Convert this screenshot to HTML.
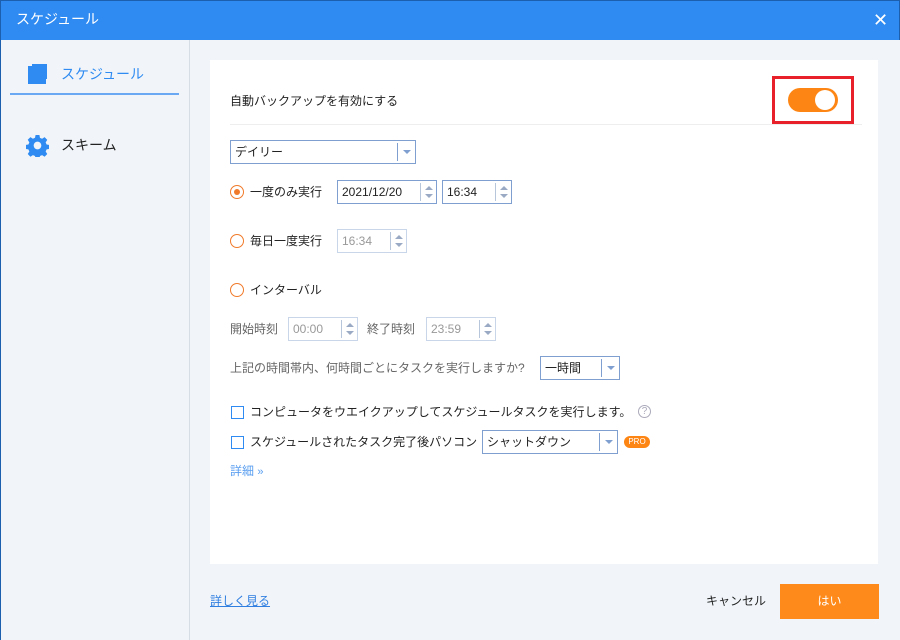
<!DOCTYPE html>
<html><head><meta charset="utf-8"><style>
*{margin:0;padding:0;box-sizing:border-box}
body{width:900px;height:640px;overflow:hidden;font-family:"Liberation Sans","Noto Sans CJK JP",sans-serif;font-size:12px;color:#222;background:#f1f5fa;position:relative}
.a{position:absolute;white-space:nowrap;line-height:16px}
.title{left:0;top:0;width:900px;height:40px;background:#2f8bf1;border:1px solid #1c5fae;border-bottom:none}
.side{left:0;top:40px;width:190px;height:600px;background:#f1f5fa;border-left:1px solid #1c5fae;border-right:1px solid #d8dde5}
.panel{left:210px;top:60px;width:668px;height:504px;background:#fff}
.box{position:absolute;border:1px solid #7f9fd0;background:#fff;height:24px;font-size:12px;line-height:22px;padding-left:4px;white-space:nowrap}
.box.dis{border-color:#c9d6ea;color:#999}
.spin{position:absolute;right:0;top:2px;width:16px;height:18px;border-left:1px solid #b8c6dc}
.spin:before{content:"";position:absolute;left:4px;top:3px;border:4px solid transparent;border-bottom:4px solid #9aaac4;border-top:none}
.spin:after{content:"";position:absolute;left:4px;top:11px;border:4px solid transparent;border-top:4px solid #9aaac4;border-bottom:none}
.dd{position:absolute;right:0;top:2px;width:18px;height:18px;border-left:1px solid #7f9fd0}
.dd:after{content:"";position:absolute;left:5px;top:7px;border:4px solid transparent;border-top:4px solid #7f9fd0;border-bottom:none}
.radio{width:14px;height:14px;border:1.5px solid #f07a2a;border-radius:50%}
.cb{width:13px;height:13px;border:1.5px solid #2f8bf1}
.gray{color:#666}
</style></head><body>
<div class="a title"></div>
<div class="a" style="left:16px;top:11px;color:#fff;font-size:14px">スケジュール</div>
<div class="a" style="left:873px;top:11px;color:#fff;font-size:18px;line-height:18px">✕</div>
<div class="a side"></div>
<div class="a" style="left:28px;top:66px;width:18px;height:18px;background:#2f8bf1"></div>
<div class="a" style="left:32px;top:64px;width:15px;height:2px;background:#2f8bf1"></div>
<div class="a" style="left:45px;top:64px;width:2px;height:15px;background:#2f8bf1"></div>
<div class="a" style="left:61px;top:66px;color:#2f8bf1;font-size:14px">スケジュール</div>
<div class="a" style="left:10px;top:93px;width:169px;height:2px;background:#6aa8f4"></div>
<svg class="a" style="left:26px;top:134px" width="23" height="23" viewBox="0 0 24 24"><path fill="#2f8bf1" d="M10 1h4l.6 3 2.2 1 2.6-1.7 2.8 2.8-1.7 2.6 1 2.2 3 .6v4l-3 .6-1 2.2 1.7 2.6-2.8 2.8-2.6-1.7-2.2 1-.6 3h-4l-.6-3-2.2-1-2.6 1.7-2.8-2.8 1.7-2.6-1-2.2-3-.6v-4l3-.6 1-2.2L1.8 6 4.6 3.2l2.6 1.7 2.2-1zM12 8a4 4 0 100 8 4 4 0 000-8z"/></svg>
<div class="a" style="left:61px;top:137px;font-size:14px">スキーム</div>

<div class="a panel"></div>
<div class="a" style="left:230px;top:93px">自動バックアップを有効にする</div>
<div class="a" style="left:230px;top:124px;width:632px;height:1px;background:#eee"></div>
<div class="a" style="left:772px;top:76px;width:82px;height:48px;border:3px solid #e8202a"></div>
<div class="a" style="left:788px;top:88px;width:50px;height:24px;border-radius:12px;background:#fd8514"></div>
<div class="a" style="left:815px;top:90px;width:20px;height:20px;border-radius:50%;background:#fff"></div>

<div class="box" style="left:230px;top:140px;width:186px">デイリー<div class="dd"></div></div>

<div class="a radio" style="left:230px;top:185px"></div>
<div class="a" style="left:234px;top:189px;width:6px;height:6px;border-radius:50%;background:#f07a2a"></div>
<div class="a" style="left:250px;top:184px">一度のみ実行</div>
<div class="box" style="left:337px;top:180px;width:100px">2021/12/20<div class="spin"></div></div>
<div class="box" style="left:442px;top:180px;width:70px">16:34<div class="spin"></div></div>

<div class="a radio" style="left:230px;top:234px"></div>
<div class="a" style="left:250px;top:233px">毎日一度実行</div>
<div class="box dis" style="left:337px;top:229px;width:70px">16:34<div class="spin"></div></div>

<div class="a radio" style="left:230px;top:283px"></div>
<div class="a" style="left:250px;top:282px">インターバル</div>

<div class="a gray" style="left:230px;top:321px">開始時刻</div>
<div class="box dis" style="left:288px;top:317px;width:70px">00:00<div class="spin"></div></div>
<div class="a gray" style="left:367px;top:321px">終了時刻</div>
<div class="box dis" style="left:426px;top:317px;width:70px">23:59<div class="spin"></div></div>

<div class="a gray" style="left:230px;top:360px">上記の時間帯内、何時間ごとにタスクを実行しますか?</div>
<div class="box" style="left:540px;top:356px;width:80px">一時間<div class="dd"></div></div>

<div class="a cb" style="left:231px;top:406px"></div>
<div class="a" style="left:250px;top:404px">コンピュータをウエイクアップしてスケジュールタスクを実行します。</div>
<div class="a" style="left:638px;top:405px;width:13px;height:13px;border:1px solid #aab;border-radius:50%;color:#aab;font-size:10px;line-height:11px;text-align:center">?</div>

<div class="a cb" style="left:231px;top:436px"></div>
<div class="a" style="left:250px;top:434px">スケジュールされたタスク完了後パソコン</div>
<div class="box" style="left:482px;top:430px;width:136px">シャットダウン<div class="dd"></div></div>
<div class="a" style="left:624px;top:436px;width:26px;height:12px;border-radius:6px;background:#fd8514;color:#fff;font-size:8px;line-height:12px;text-align:center">PRO</div>

<div class="a" style="left:230px;top:463px;color:#5a9ef0">詳細 <span style="font-size:11px">»</span></div>

<div class="a" style="left:210px;top:593px;color:#2f7ee0;text-decoration:underline">詳しく見る</div>
<div class="a" style="left:706px;top:593px">キャンセル</div>
<div class="a" style="left:780px;top:584px;width:99px;height:35px;background:#fd8a1a;color:#fff;text-align:center;line-height:35px">はい</div>
</body></html>
